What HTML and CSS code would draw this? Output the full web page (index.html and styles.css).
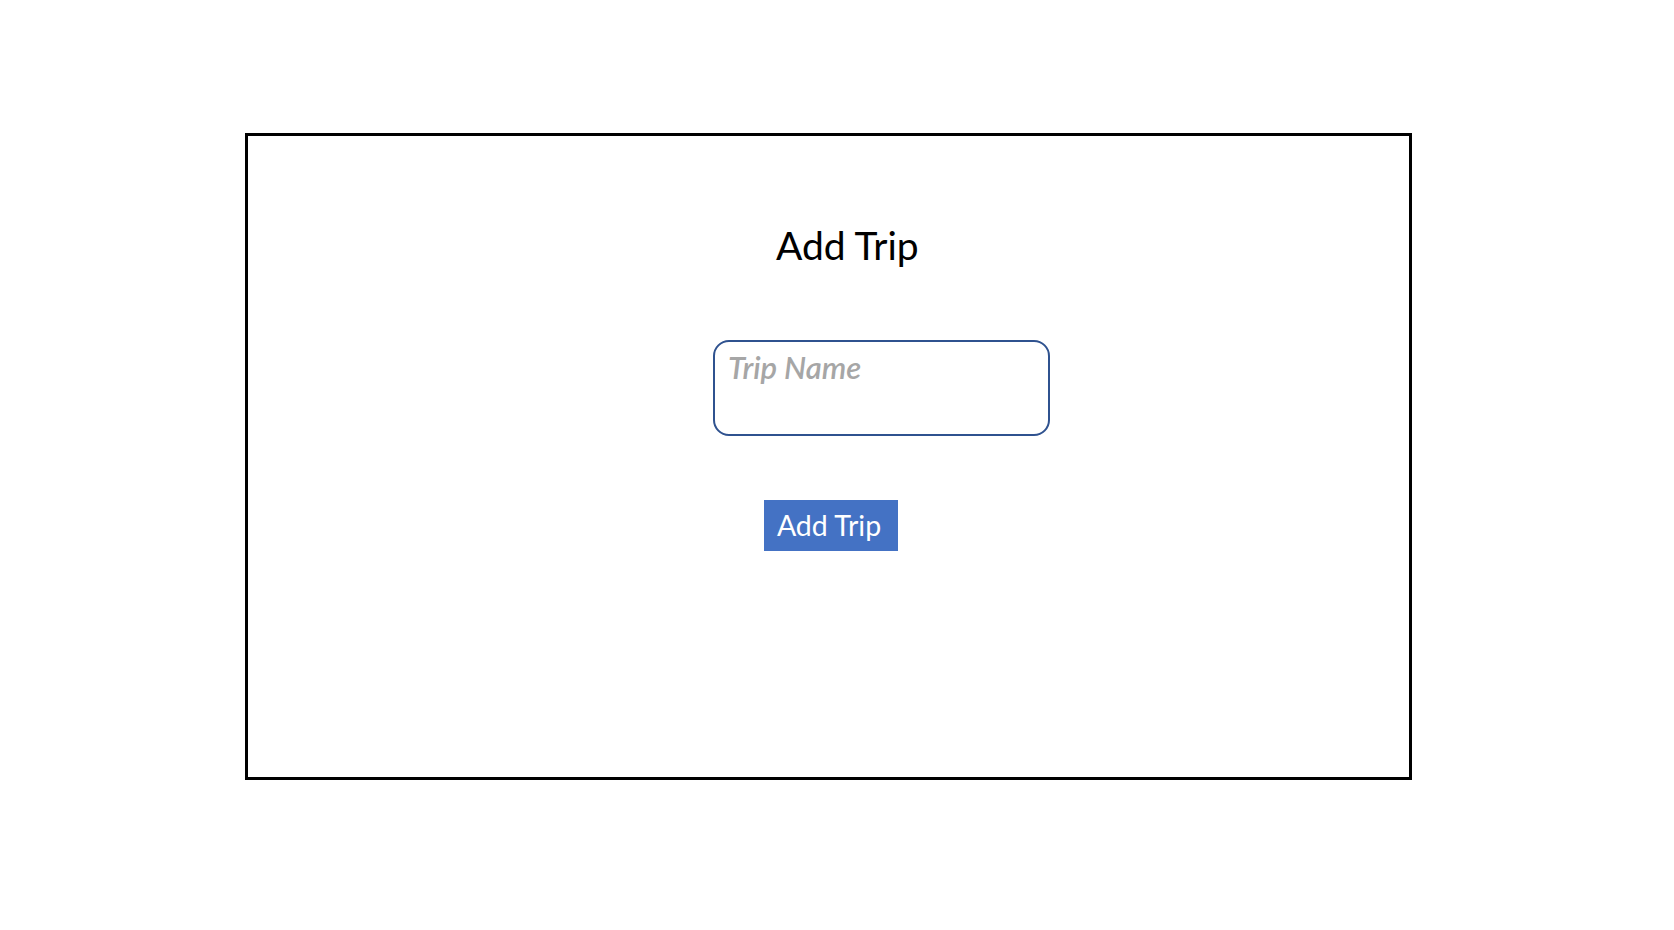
FILE: index.html
```html
<!DOCTYPE html>
<html>
<head>
<meta charset="utf-8">
<link rel="stylesheet" href="styles.css">
<title>Add Trip</title>
</head>
<body>
<div class="frame">
  <h1 class="title">Add Trip</h1>
  <textarea class="trip-name" placeholder="Trip Name"></textarea>
  <button class="add-btn" type="button">Add Trip</button>
</div>
</body>
</html>
```
FILE: styles.css
```css
html, body {
  margin: 0;
  padding: 0;
  background: #ffffff;
}
body {
  font-family: Lato, "Open Sans", sans-serif;
}
.frame {
  box-sizing: border-box;
  margin-left: 245px;
  margin-top: 133px;
  width: 1167px;
  height: 647px;
  border: 3px solid #000000;
  display: flex;
  flex-direction: column;
  align-items: flex-start;
  padding-top: 89px;
}
.title {
  margin: 0 0 0 528px;
  font-size: 39px;
  line-height: 40px;
  font-weight: 400;
  color: #000000;
}
.trip-name {
  box-sizing: border-box;
  margin: 75px 0 0 465px;
  width: 337px;
  height: 96px;
  border: 2px solid #2f528f;
  border-radius: 16px;
  padding: 10px 12px 0 13px;
  font-family: Lato, "Open Sans", sans-serif;
  font-size: 31px;
  line-height: 31px;
  resize: none;
  outline: none;
  background: #ffffff;
}
.trip-name::placeholder {
  color: #a6a6a6;
  font-style: italic;
  font-weight: 600;
  opacity: 1;
}
.add-btn {
  box-sizing: border-box;
  margin: 64px 0 0 516px;
  width: 134px;
  height: 51px;
  border: none;
  border-radius: 0;
  background: #4472c4;
  color: #ffffff;
  font-family: Lato, "Open Sans", sans-serif;
  font-size: 28.5px;
  line-height: 51px;
  padding: 0 4px 0 0;
  text-align: center;
}
```
